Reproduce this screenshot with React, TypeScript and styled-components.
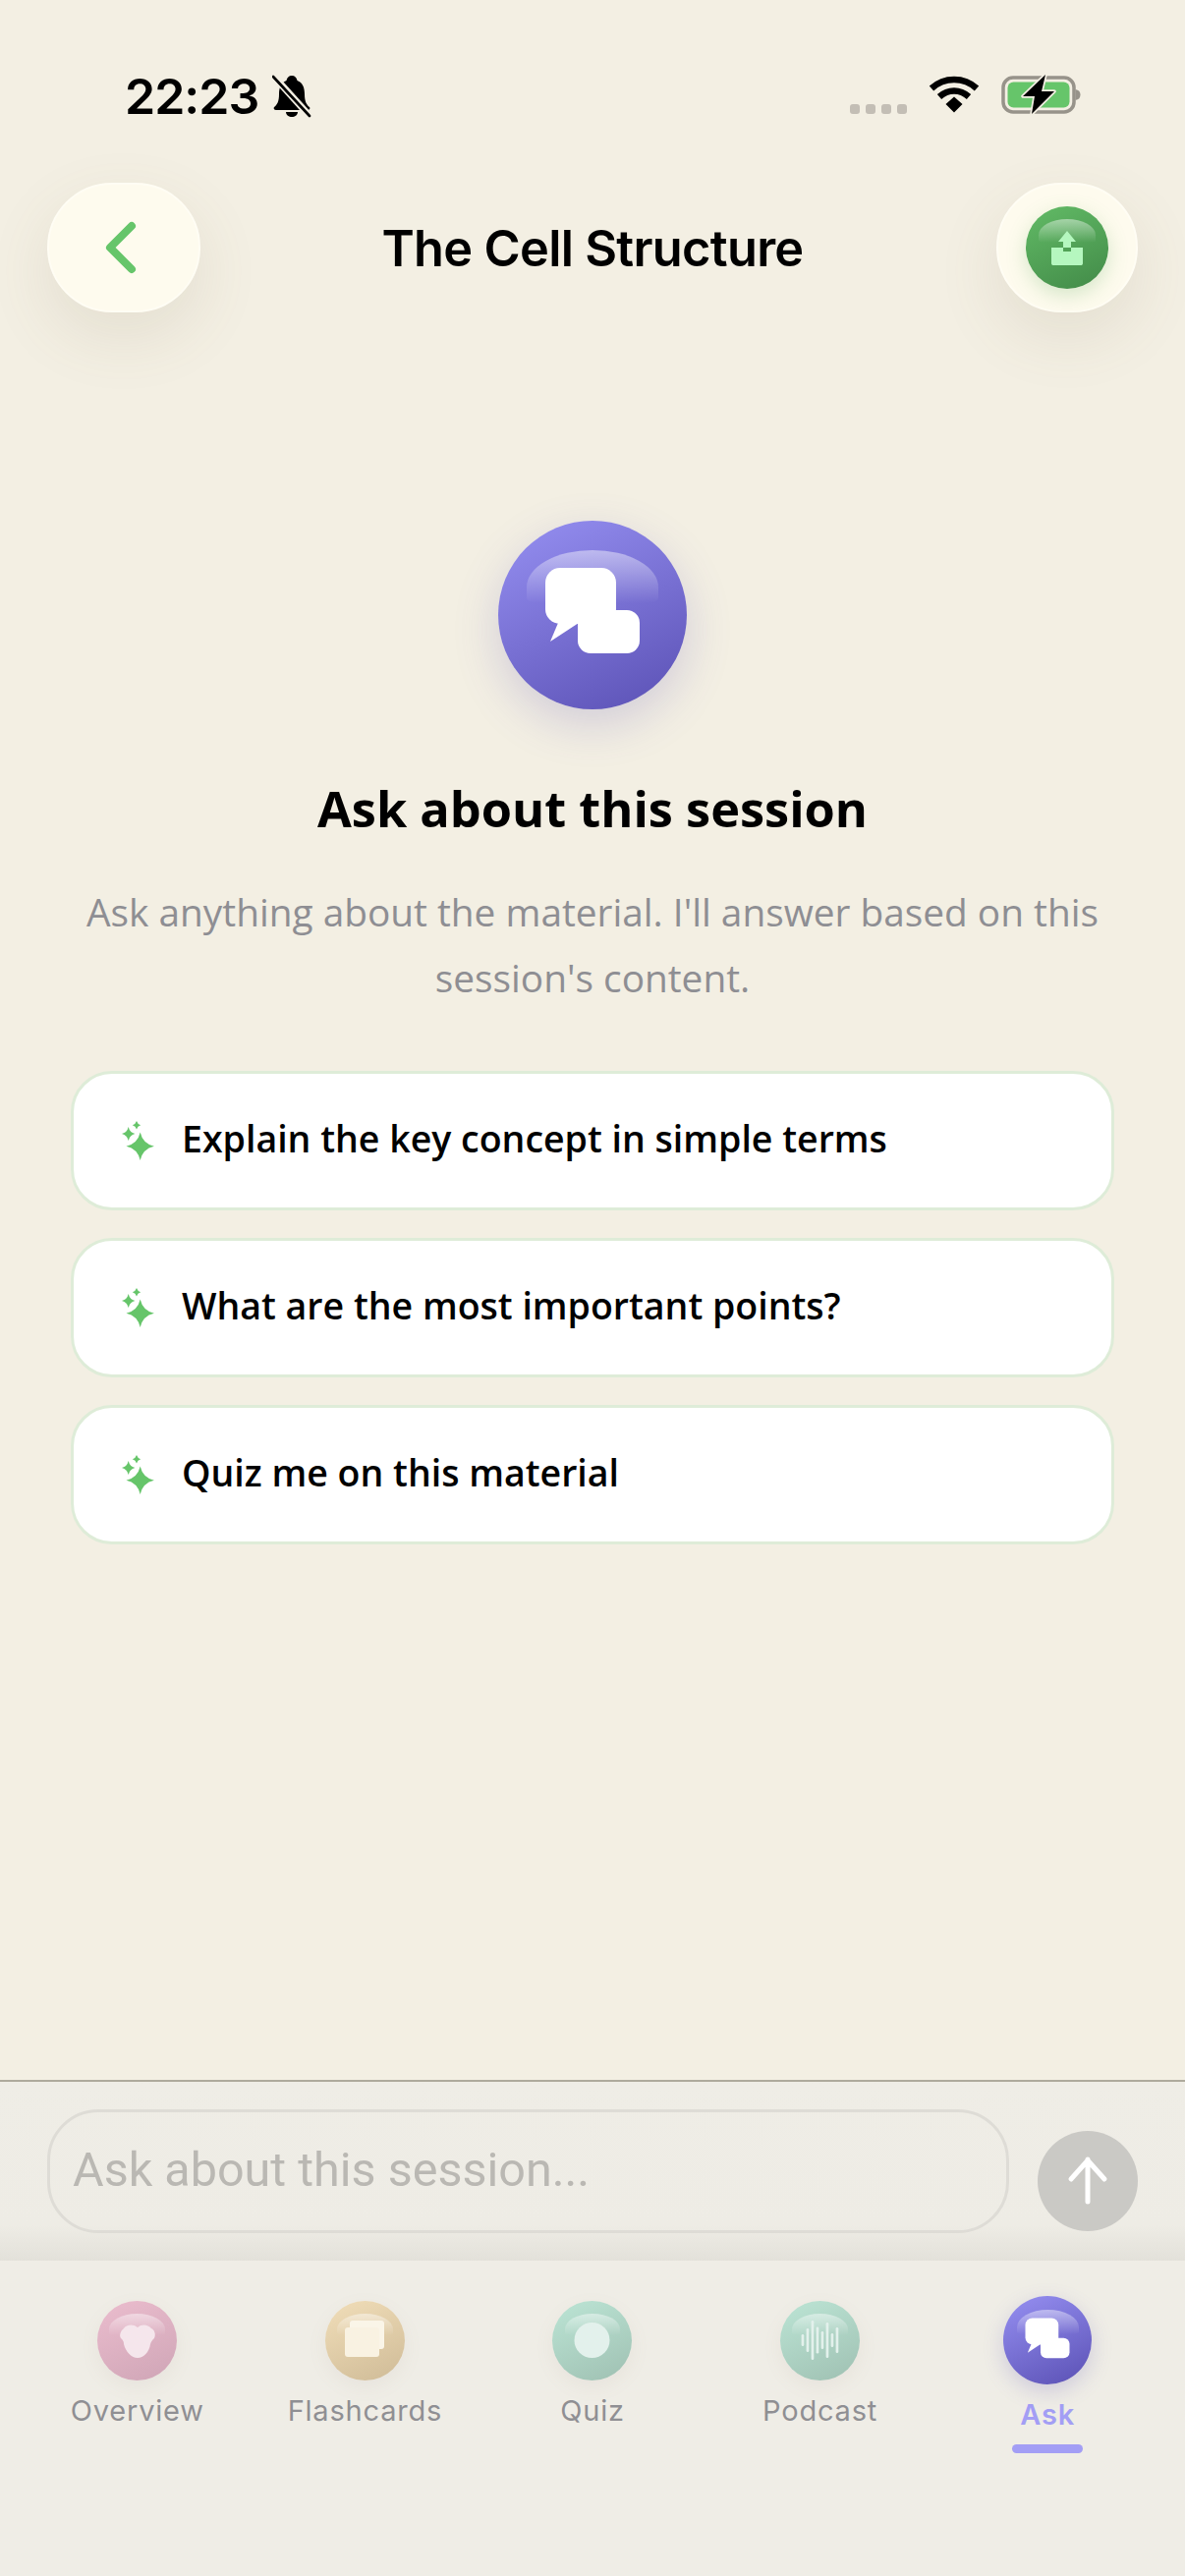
import styled, { createGlobalStyle } from "styled-components";

const GlobalStyle = createGlobalStyle`
  html, body {
    margin: 0;
    padding: 0;
    background: #f3efe3;
  }
  * {
    box-sizing: border-box;
  }
`;

const Page = styled.div`
  width: 1206px;
  height: 2622px;
  display: flex;
  flex-direction: column;
  background: #f3efe3;
  overflow: hidden;
`;

const StatusBar = styled.div`
  height: 186px;
  padding: 72px 103px 0 127px;
  display: flex;
  justify-content: space-between;
  align-items: flex-start;
`;

const StatusGroup = styled.div<{ $gap: number; $top?: number }>`
  display: flex;
  align-items: center;
  gap: ${props => props.$gap}px;
  margin-top: ${props => props.$top ?? 0}px;
`;

const Time = styled.span`
  font-family: Inter, "Liberation Sans", sans-serif;
  font-size: 50px;
  line-height: 52px;
  font-weight: 600;
  letter-spacing: -1px;
  color: #000;
`;

const SignalDots = styled.div`
  display: flex;
  gap: 6px;
  align-self: flex-end;
  margin-bottom: 1px;
`;

const SignalDot = styled.span`
  width: 10px;
  height: 10px;
  border-radius: 3px;
  background: #c3beb5;
`;

const Header = styled.header`
  height: 132px;
  padding: 0 48px;
  display: grid;
  grid-template-columns: 1fr auto 1fr;
  align-items: center;
`;

const HeaderButton = styled.button<{ $width: number; $end?: boolean }>`
  width: ${props => props.$width}px;
  height: 132px;
  padding: 0;
  border: 2px solid #fffdf4;
  border-radius: 66px;
  background: #fefbee;
  box-shadow: 0 24px 64px rgba(120, 105, 70, 0.12);
  display: flex;
  align-items: center;
  justify-content: center;
  justify-self: ${props => (props.$end ? "end" : "start")};
`;

const BackGlyph = styled.svg`
  width: 32px;
  height: 54px;
  margin-right: 7px;
`;

const Title = styled.h1`
  margin: 0;
  font-family: Inter, "Liberation Sans", sans-serif;
  font-size: 50.5px;
  font-weight: 600;
  letter-spacing: -0.7px;
  color: #000;
`;

const Main = styled.main`
  flex: 1;
  padding: 212px 72px 0;
  display: flex;
  flex-direction: column;
  align-items: center;
`;

const Orb = styled.div<{ $size: number; $from: string; $to: string; $glow?: string }>`
  position: relative;
  flex: none;
  width: ${props => props.$size}px;
  height: ${props => props.$size}px;
  border-radius: 50%;
  background: linear-gradient(155deg, ${props => props.$from}, ${props => props.$to});
  box-shadow: 0 ${props => props.$size * 0.08}px ${props => props.$size * 0.24}px ${props => props.$glow ?? "transparent"};

  &::before {
    content: "";
    position: absolute;
    top: 15.6%;
    left: 15%;
    width: 70%;
    height: 28%;
    border-radius: 50% 50% 12% 12% / 70% 70% 10% 10%;
    background: linear-gradient(180deg, rgba(255, 255, 255, 0.46), rgba(255, 255, 255, 0));
  }

  svg {
    position: relative;
    display: block;
    width: 100%;
    height: 100%;
  }
`;

const Heading = styled.h2`
  margin: 70px 0 0;
  font-family: "Open Sans", sans-serif;
  font-size: 50.5px;
  line-height: 62px;
  font-weight: 700;
  color: #000;
`;

const Subtitle = styled.p`
  margin: 41px 0 0;
  width: 1060px;
  text-align: center;
  font-family: "Open Sans", sans-serif;
  font-size: 38.8px;
  line-height: 67px;
  font-weight: 500;
  color: #8e8e93;
`;

const Suggestions = styled.div`
  align-self: stretch;
  margin-top: 61px;
  display: flex;
  flex-direction: column;
  gap: 28px;
`;

const Suggestion = styled.button`
  height: 142px;
  padding: 0 0 0 49px;
  border: 3px solid #deecd8;
  border-radius: 42px;
  background: #fff;
  display: flex;
  align-items: center;
  gap: 28px;
  font-family: "Open Sans", sans-serif;
  font-size: 37.5px;
  font-weight: 600;
  color: #000;
`;

const SuggestionText = styled.span`
  padding-bottom: 5px;
`;

const SparkleIcon = styled.svg`
  width: 33px;
  height: 40px;
  flex: none;
`;

const Composer = styled.div`
  height: 184px;
  padding: 28px 48px 0;
  border-top: 2px solid #aeaa9c;
  background: linear-gradient(180deg, #efede6 0, #eeece5 80%, #e3e1da 100%);
  display: flex;
  align-items: flex-start;
  gap: 29px;
`;

const ComposerField = styled.div`
  flex: 1;
  height: 126px;
  padding: 0 23px 4px;
  border: 3px solid #dedcd6;
  border-radius: 52px;
  display: flex;
  align-items: center;
  font-family: Roboto, sans-serif;
  font-size: 48.5px;
  color: #bab8b3;
`;

const SendButton = styled.button`
  width: 102px;
  height: 102px;
  margin-top: 22px;
  padding: 0;
  border: 0;
  border-radius: 50%;
  background: #cac9c5;
  display: flex;
  align-items: center;
  justify-content: center;
  flex: none;
`;

const TabBar = styled.nav`
  height: 321px;
  padding: 0 24px;
  background: #efede6;
  display: grid;
  grid-template-columns: repeat(5, 1fr);
`;

const Tab = styled.div<{ $active?: boolean }>`
  padding-top: ${props => (props.$active ? 36 : 41)}px;
  display: flex;
  flex-direction: column;
  align-items: center;
`;

const TabLabel = styled.span<{ $active?: boolean }>`
  margin-top: 13px;
  font-family: Inter, "Liberation Sans", sans-serif;
  font-size: 29px;
  line-height: 36px;
  font-weight: ${props => (props.$active ? 600 : 400)};
  letter-spacing: 0.8px;
  color: ${props => (props.$active ? "#a39ef5" : "#8f8f93")};
`;

const TabMarker = styled.span`
  width: 72px;
  height: 9px;
  margin-top: 12px;
  border-radius: 5px;
  background: #a39ef5;
`;

const ChatGlyph = () => (
  <svg viewBox="0 0 192 192">
    <path d="M61 104 L53 123 L82 104Z" fill="#fff" />
    <rect x="48" y="48" width="72" height="57" rx="15" fill="#fff" />
    <rect x="81" y="91" width="63" height="44" rx="13" fill="#fff" />
  </svg>
);

const OverviewGlyph = () => (
  <svg viewBox="0 0 81 81">
    <path
      d="M41 27C37 23 29 24 27 28C24 30 22 35 24 38C26 40 27 41 27 44C29 52 35 58 41 58C47 58 53 52 54 44C55 41 56 40 58 38C60 34 58 29 55 28C52 24 45 23 41 27Z"
      fill="#f5e6ec"
    />
  </svg>
);

const CardsGlyph = () => (
  <svg viewBox="0 0 81 81">
    <rect x="25" y="20" width="35" height="29" rx="3" fill="#faf5e8" />
    <rect x="20" y="27" width="35" height="30" rx="3" fill="#f9f2e2" />
  </svg>
);

const QuizGlyph = () => (
  <svg viewBox="0 0 81 81">
    <circle cx="40.5" cy="40" r="18" fill="#e3f1ec" />
  </svg>
);

const waveBars = [6, 12, 20, 13.5, 9, 18, 7, 13];

const WaveGlyph = () => (
  <svg viewBox="0 0 81 81">
    {waveBars.map((half, i) => (
      <rect key={i} x={21.6 + i * 5} y={40 - half} width="2.7" height={half * 2} rx="1.3" fill="#e3f1ec" />
    ))}
  </svg>
);

const Sparkle = () => (
  <SparkleIcon viewBox="0 0 33 40" fill="#66c56a">
    <path d="M18.700 11.500Q21.300 23.100 32.900 25.700Q21.300 28.300 18.700 39.900Q16.100 28.300 4.500 25.700Q16.100 23.100 18.700 11.500Z" />
    <path d="M6.700 6Q8 11.700 13.400 13Q8 14.300 6.700 20Q5.400 14.300 0 13Q5.400 11.700 6.700 6Z" />
    <path d="M15 0Q15.900 3.100 19.200 4.200Q15.900 5.300 15 8.500Q14.100 5.300 10.800 4.200Q14.100 3.100 15 0Z" />
  </SparkleIcon>
);

const tabs = [
  { label: "Overview", from: "#ebbdce", to: "#cfa5b6", glyph: <OverviewGlyph /> },
  { label: "Flashcards", from: "#f1deb9", to: "#cfbb97", glyph: <CardsGlyph /> },
  { label: "Quiz", from: "#bce5d5", to: "#9fc0b2", glyph: <QuizGlyph /> },
  { label: "Podcast", from: "#bce5d5", to: "#9fc0b2", glyph: <WaveGlyph /> },
];

const suggestions = [
  "Explain the key concept in simple terms",
  "What are the most important points?",
  "Quiz me on this material",
];

export default function App() {
  return (
    <Page>
      <GlobalStyle />
      <StatusBar>
        <StatusGroup $gap={14}>
          <Time>22:23</Time>
          <svg width="40" height="44" viewBox="0 0 40 44">
            <path d="M20 1C23 1 25 3 25.500 6C31 8 33 13 33 20C33 27 35 31 38 33C39 34 38 36 36 36H4C2 36 1 34 2 33C5 31 7 27 7 20C7 13 9 8 14.500 6C15 3 17 1 20 1Z" fill="#000" />
            <path d="M14 38H26C26 41 23 43 20 43C17 43 14 41 14 38Z" fill="#000" />
            <path d="M1 1L39 43" stroke="#f3efe3" strokeWidth="7" />
            <path d="M1 2L38 42" stroke="#000" strokeWidth="2.600" strokeLinecap="round" />
          </svg>
        </StatusGroup>
        <StatusGroup $gap={22} $top={3}>
          <SignalDots>
            <SignalDot />
            <SignalDot />
            <SignalDot />
            <SignalDot />
          </SignalDots>
          <svg width="52" height="38" viewBox="0 0 52 38" fill="none">
            <path d="M3 13C16 1 36 1 49 13" stroke="#000" strokeWidth="6.500" />
            <path d="M11 21.500C20 13.500 32 13.500 41 21.500" stroke="#000" strokeWidth="6.500" />
            <path d="M17.500 29L26 21.500L34.500 29L26 37.500Z" fill="#000" />
          </svg>
          <svg width="84" height="42" viewBox="0 0 84 42">
            <rect x="2" y="4" width="72" height="35" rx="10" fill="none" stroke="#97938a" strokeWidth="3.500" />
            <rect x="6.500" y="8.500" width="63" height="26" rx="6" fill="#66c56a" />
            <path d="M75.500 16C79 16.500 80.500 18.500 80.500 21.500C80.500 24.500 79 26.500 75.500 27Z" fill="#97938a" />
            <path d="M45 1L22 23H34L31 41L54 18H41Z" fill="#000" stroke="#f3efe3" strokeWidth="3.500" strokeLinejoin="round" paintOrder="stroke" />
          </svg>
        </StatusGroup>
      </StatusBar>

      <Header>
        <HeaderButton $width={156}>
          <BackGlyph viewBox="0 0 32 54" fill="none">
            <path d="M27 5L5 27L27 49" stroke="#66c56a" strokeWidth="8" strokeLinecap="round" strokeLinejoin="round" />
          </BackGlyph>
        </HeaderButton>
        <Title>The Cell Structure</Title>
        <HeaderButton $width={144} $end>
          <Orb $size={84} $from="#62bb66" $to="#428a48" $glow="rgba(90, 170, 90, 0.25)">
            <svg viewBox="0 0 84 84">
              <path d="M42 25L51 36H46V42H38V36H33Z" fill="#b5f7bf" />
              <path d="M26 42H38V46H46V42H58V58C58 59.500 57 60 56 60H28C27 60 26 59.500 26 58Z" fill="#b5f7bf" />
            </svg>
          </Orb>
        </HeaderButton>
      </Header>

      <Main>
        <Orb $size={192} $from="#9690f2" $to="#5a50b4" $glow="rgba(90, 80, 180, 0.22)">
          <ChatGlyph />
        </Orb>
        <Heading>Ask about this session</Heading>
        <Subtitle>Ask anything about the material. I'll answer based on this session's content.</Subtitle>
        <Suggestions>
          {suggestions.map(text => (
            <Suggestion key={text}>
              <Sparkle />
              <SuggestionText>{text}</SuggestionText>
            </Suggestion>
          ))}
        </Suggestions>
      </Main>

      <Composer>
        <ComposerField>Ask about this session...</ComposerField>
        <SendButton>
          <svg width="44" height="52" viewBox="0 0 44 52" fill="none">
            <path d="M22 4V47M5 24L22 5L39 24" stroke="#fff" strokeWidth="5" strokeLinecap="round" strokeLinejoin="round" />
          </svg>
        </SendButton>
      </Composer>

      <TabBar>
        {tabs.map(tab => (
          <Tab key={tab.label}>
            <Orb $size={81} $from={tab.from} $to={tab.to} $glow="rgba(150, 130, 110, 0.08)">
              {tab.glyph}
            </Orb>
            <TabLabel>{tab.label}</TabLabel>
          </Tab>
        ))}
        <Tab $active>
          <Orb $size={90} $from="#9690f2" $to="#5a50b4" $glow="rgba(90, 80, 180, 0.22)">
            <ChatGlyph />
          </Orb>
          <TabLabel $active>Ask</TabLabel>
          <TabMarker />
        </Tab>
      </TabBar>
    </Page>
  );
}
